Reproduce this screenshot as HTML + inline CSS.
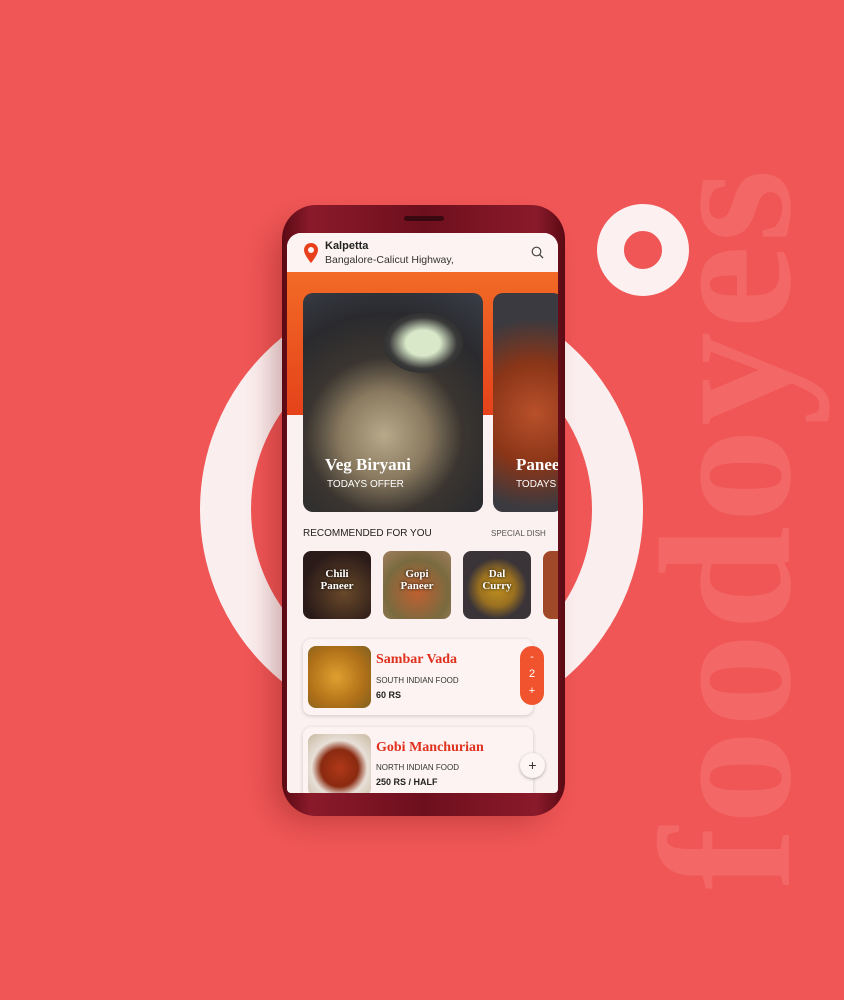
<!DOCTYPE html>
<html><head><meta charset="utf-8"><style>
*{margin:0;padding:0;box-sizing:border-box}
body{width:844px;height:1000px;background:#ef5655;position:relative;overflow:hidden;font-family:"Liberation Sans",sans-serif}
.ring{position:absolute;left:200px;top:288px;width:443px;height:443px;border-radius:50%;border:51px solid #fbeeee}
.sring{position:absolute;left:597px;top:204px;width:92px;height:92px;border-radius:50%;border:27px solid #fcf0f0}
.brand{position:absolute;left:632px;top:890px;transform-origin:0 0;transform:rotate(-90deg);font-family:"Liberation Serif",serif;font-weight:bold;font-size:188px;line-height:1;color:#f36866;white-space:nowrap;letter-spacing:3px}
.shadow{position:absolute;left:284px;top:215px;width:278px;height:600px;border-radius:34px;box-shadow:-12px 8px 26px rgba(110,20,20,.3)}
.phone{position:absolute;left:282px;top:205px;width:283px;height:611px;border-radius:34px;background:linear-gradient(90deg,#5a0a14,#8a1a2a 10%,#6e0f1e 50%,#8a1a2a 90%,#5a0a14)}
.spk{position:absolute;left:404px;top:216px;width:40px;height:5px;border-radius:3px;background:#3a0810}
.screen{position:absolute;left:287px;top:233px;width:271px;height:560px;border-radius:14px 14px 4px 4px;background:#fbf1f0;overflow:hidden}
.hdr{position:absolute;left:0;top:0;width:271px;height:39px;background:#fcf3f2}
.band{position:absolute;left:0;top:39px;width:271px;height:143px;background:linear-gradient(180deg,#f26a26,#e5421a)}
.card{position:absolute;top:60px;height:219px;border-radius:10px;overflow:hidden}
.t1{font-family:"Liberation Serif",serif;font-weight:bold;color:#fff;font-size:17px;position:absolute;white-space:nowrap}
.t2{color:#fff;font-size:10px;position:absolute;white-space:nowrap}
.sm{position:absolute;top:318px;width:68px;height:68px;border-radius:8px;overflow:hidden}
.sm span{position:absolute;left:0;right:0;top:17px;text-align:center;color:#fff;font-family:"Liberation Serif",serif;font-weight:bold;font-size:11px;line-height:12px;text-shadow:0 0 3px #000}
.item{position:absolute;left:16px;width:230px;border-radius:8px;background:#fcf3f2;box-shadow:0 1px 4px rgba(0,0,0,.18)}
.img{position:absolute;left:5px;top:7px;width:63px;height:62px;border-radius:8px}
.nm{position:absolute;left:73px;font-family:"Liberation Serif",serif;font-weight:bold;color:#e0301e;font-size:14px}
.sub{position:absolute;left:73px;font-size:8px;color:#333}
.pr{position:absolute;left:73px;font-size:9px;font-weight:bold;color:#222}
</style></head><body>
<div class="ring"></div>
<div class="sring"></div>
<div class="brand">foodoyes</div>
<div class="shadow"></div>
<div class="phone"></div>
<div class="spk"></div>
<div class="screen">
 <div class="hdr">
  <svg style="position:absolute;left:16px;top:9px" width="16" height="22" viewBox="0 0 16 22"><path d="M8 1C4 1 1 4 1 8c0 5 7 13 7 13s7-8 7-13c0-4-3-7-7-7z" fill="#e8401c"/><circle cx="8" cy="8" r="3" fill="#fcf3f2"/></svg>
  <div style="position:absolute;left:38px;top:7px;font-size:11px;font-weight:bold;color:#222">Kalpetta</div>
  <div style="position:absolute;left:38px;top:21px;font-size:10.5px;color:#333">Bangalore-Calicut Highway,</div>
  <svg style="position:absolute;left:244px;top:13px" width="13" height="13" viewBox="0 0 13 13"><circle cx="5.5" cy="5.5" r="4.3" fill="none" stroke="#444" stroke-width="1.2"/><path d="M8.7 8.7L12 12" stroke="#444" stroke-width="1.3"/></svg>
 </div>
 <div class="band"></div>
 <div class="card" style="left:16px;width:180px;background:radial-gradient(circle at 45% 65%,#b8a98a 0,#8a7a60 25%,#3a3530 45%,#2a2a2e 70%,#3a3e48 100%)">
  <div style="position:absolute;left:80px;top:20px;width:80px;height:60px;border-radius:50%;background:radial-gradient(#d8e8c8 30%,#3a3a3a 60%,#1a1a1a)"></div>
  <div class="t1" style="left:22px;top:162px">Veg Biryani</div>
  <div class="t2" style="left:24px;top:186px">TODAYS OFFER</div>
 </div>
 <div class="card" style="left:206px;width:70px;background:radial-gradient(circle at 60% 55%,#b8502a 0,#8a3518 40%,#3a3a40 75%)">
  <div class="t1" style="left:23px;top:162px">Paneer</div>
  <div class="t2" style="left:23px;top:186px">TODAYS OFFER</div>
 </div>
 <div style="position:absolute;left:16px;top:295px;font-size:10px;color:#222">RECOMMENDED FOR YOU</div>
 <div style="position:absolute;left:204px;top:296px;font-size:8px;color:#555">SPECIAL DISH</div>
 <div class="sm" style="left:16px;background:radial-gradient(circle at 60% 60%,#6a4a2a,#2a1a18 70%)"><span>Chili<br>Paneer</span></div>
 <div class="sm" style="left:96px;background:radial-gradient(circle at 50% 60%,#c06030,#7a6a40 60%,#a08060)"><span>Gopi<br>Paneer</span></div>
 <div class="sm" style="left:176px;background:radial-gradient(circle at 50% 55%,#c09020 0,#9a7020 35%,#3a3438 60%)"><span>Dal<br>Curry</span></div>
 <div class="sm" style="left:256px;background:#a04828"></div>
 <div class="item" style="top:406px;height:76px">
  <div class="img" style="background:radial-gradient(circle at 45% 50%,#e0a030,#b07018 60%,#806020)"></div>
  <div class="nm" style="top:13px">Sambar Vada</div>
  <div class="sub" style="top:37px">SOUTH INDIAN FOOD</div>
  <div class="pr" style="top:51px">60 RS</div>
 </div>
 <div style="position:absolute;left:233px;top:413px;width:24px;height:59px;border-radius:12px;background:#f0532d;color:#fff;font-size:11px;text-align:center;line-height:17px;padding-top:3px">-<br>2<br>+</div>
 <div class="item" style="top:494px;height:80px">
  <div class="img" style="background:radial-gradient(circle at 50% 55%,#b03818,#8a2a10 40%,#e8e0d8 60%,#c8b8a0)"></div>
  <div class="nm" style="top:13px">Gobi Manchurian</div>
  <div class="sub" style="top:36px">NORTH INDIAN FOOD</div>
  <div class="pr" style="top:50px">250 RS / HALF</div>
 </div>
 <div style="position:absolute;left:233px;top:520px;width:25px;height:25px;border-radius:50%;background:#fcf5f4;box-shadow:0 1px 3px rgba(0,0,0,.3);text-align:center;line-height:24px;font-size:14px;color:#333">+</div>
</div>
</body></html>
